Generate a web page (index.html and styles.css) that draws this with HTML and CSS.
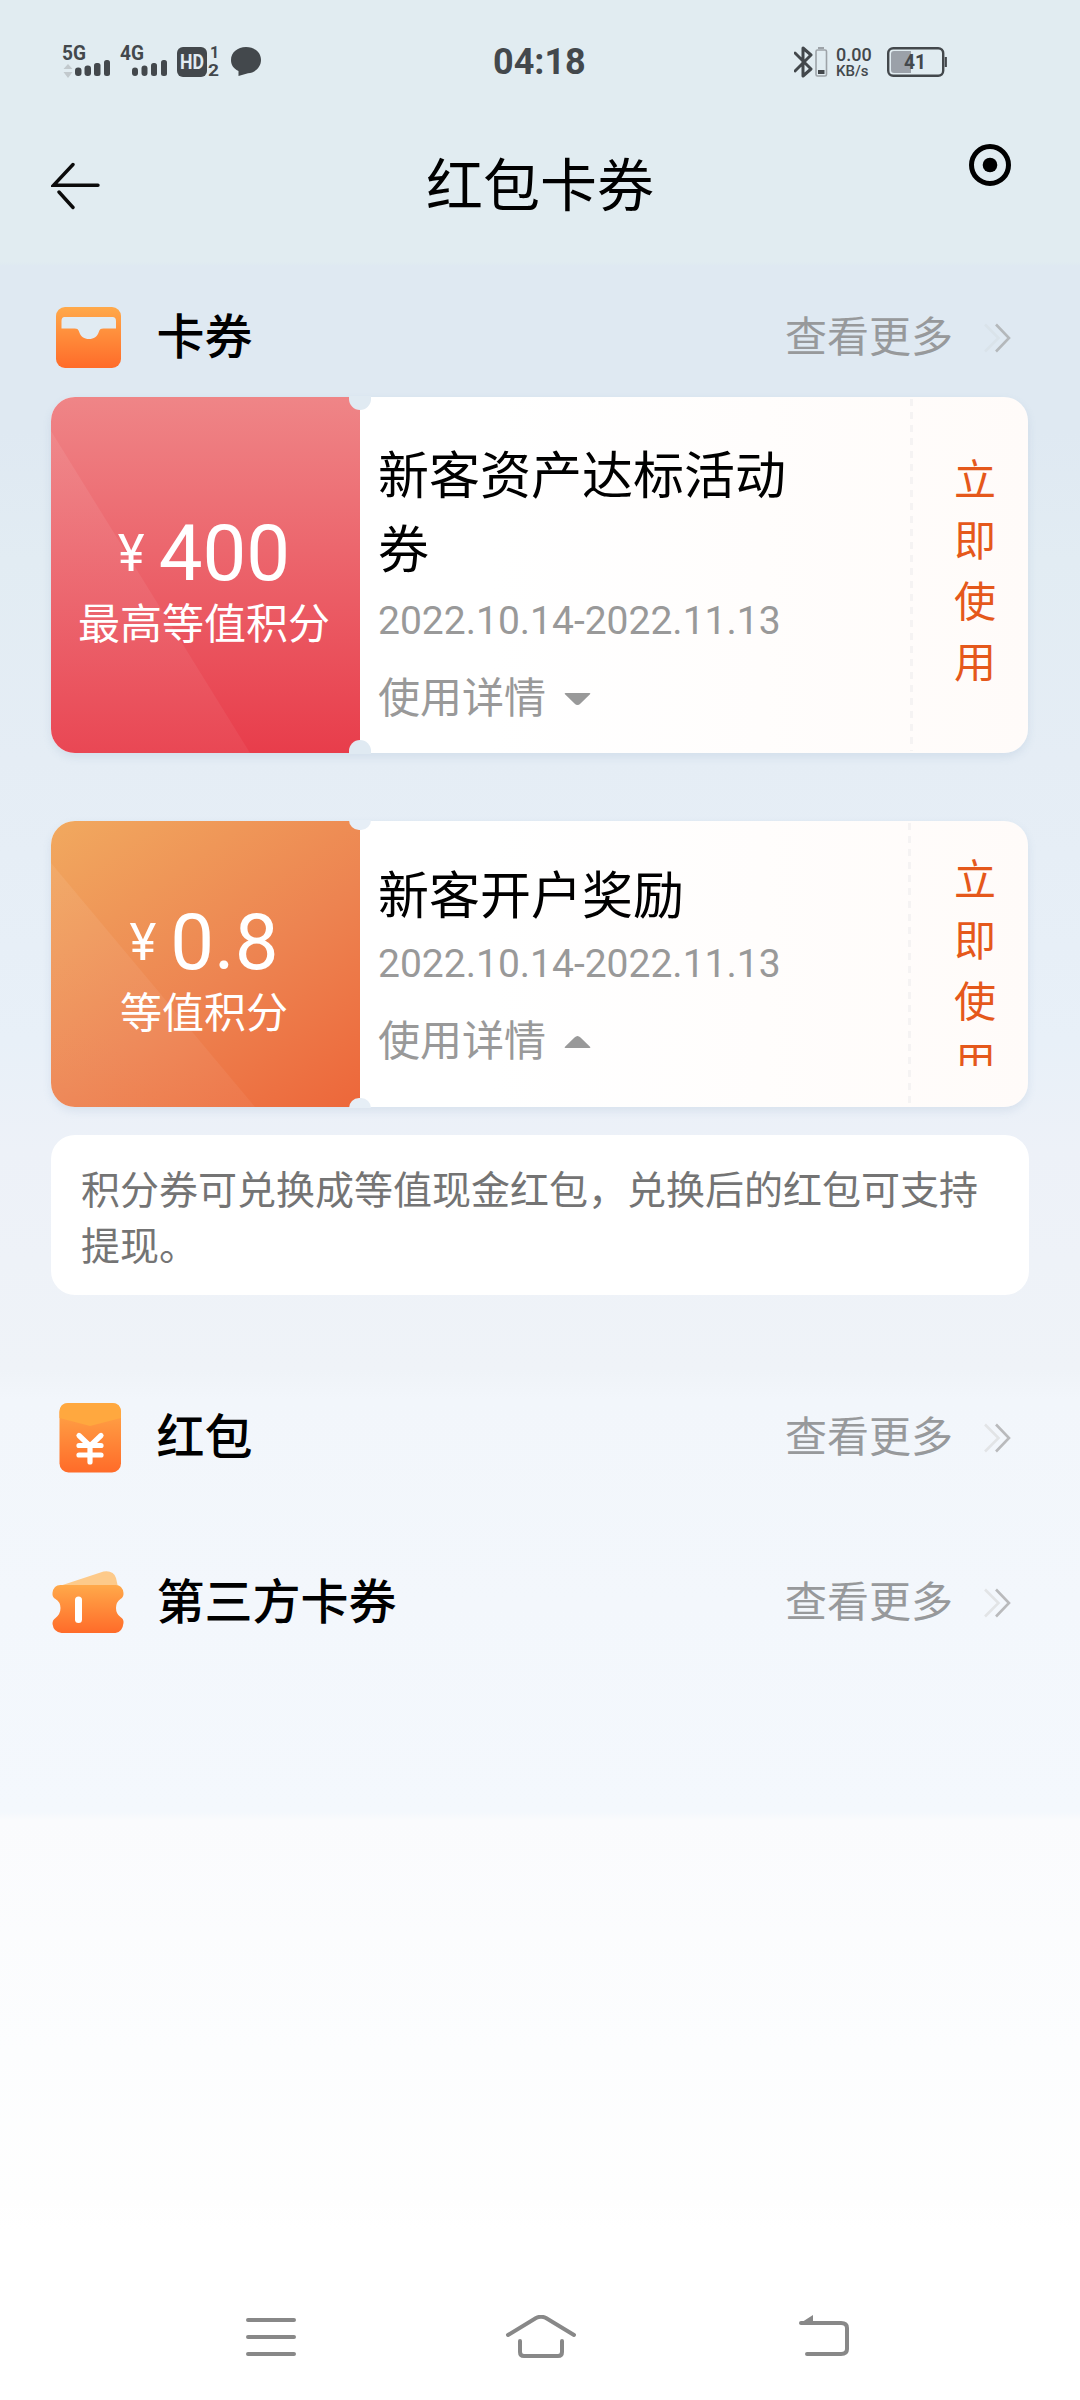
FILE: index.html
```html
<!DOCTYPE html>
<html lang="zh-CN">
<head>
<meta charset="utf-8">
<title>红包卡券</title>
<link rel="stylesheet" href="styles.css">
</head>
<body>
<div class="screen">
  <div class="status">
    <div class="status-left">
      <svg width="204" height="40" viewBox="60 42 204 40">
        <g fill="#43484c">
          <text class="net" x="62" y="60" textLength="24" lengthAdjust="spacingAndGlyphs">5G</text>
          <rect x="75" y="67.500" width="6.500" height="8.500" rx="3"/><rect x="84.500" y="65.500" width="6.500" height="10.500" rx="3"/><rect x="94" y="63" width="6.500" height="13" rx="2.500"/><rect x="104" y="60" width="6" height="16" rx="2.500"/>
          <text class="net" x="120" y="60" textLength="24" lengthAdjust="spacingAndGlyphs">4G</text>
          <rect x="132" y="67.500" width="6" height="8.500" rx="3"/><rect x="141.500" y="65.500" width="6" height="10.500" rx="3"/><rect x="151" y="63" width="6" height="13" rx="2.500"/><rect x="161" y="60" width="6" height="16" rx="2.500"/>
          <rect x="177" y="47" width="30" height="30" rx="6"/>
          <text class="sim" x="210" y="58">1</text>
          <text class="sim" x="208" y="76" textLength="11" lengthAdjust="spacingAndGlyphs">2</text>
          <path d="M246 47c8.500 0 15 5.500 15 13s-6.500 13-13 13.300L238.500 76v-5C233 68.500 231 64.500 231 60c0-7.500 6.500-13 15-13z"/>
        </g>
        <path d="M63.500 69l4.500-5 4.500 5zM63.500 72l4.500 6 4.500-6z" fill="#c2c9cd"/>
        <text class="hd" x="180" y="69" textLength="24" lengthAdjust="spacingAndGlyphs">HD</text>
      </svg>
    </div>
    <div class="time">04:18</div>
    <div class="status-right">
      <svg width="34" height="34" viewBox="794 45 34 34">
        <path d="M795 53l16 16-8 7V48l8 7-16 16" fill="none" stroke="#43484c" stroke-width="3" stroke-linejoin="round" stroke-linecap="round"/>
        <rect x="816" y="50" width="10.500" height="26" rx="1.500" fill="none" stroke="#9da3a8" stroke-width="1.600"/>
        <path d="M818 48h6" stroke="#9da3a8" stroke-width="2"/>
        <path d="M818 70h6.500v4H818z" fill="#43484c"/>
      </svg>
      <div class="speed"><span>0.00</span><span class="unit">KB/s</span></div>
      <svg width="62" height="32" viewBox="886 46 62 32">
        <rect x="888.200" y="48.200" width="55" height="27.600" rx="5" fill="none" stroke="#43484c" stroke-width="2.400"/>
        <path d="M894 51h17v22h-17a3 3 0 0 1-3-3V54a3 3 0 0 1 3-3z" fill="#9ba1a9"/>
        <path d="M945.800 57v10" stroke="#43484c" stroke-width="2.200"/>
        <text class="level" x="904" y="69" textLength="22" lengthAdjust="spacingAndGlyphs">41</text>
      </svg>
    </div>
  </div>

  <header class="header">
    <svg class="back" width="50" height="50" viewBox="51 160 50 50" fill="none" stroke="#0b0b0b" stroke-width="3.400" stroke-linecap="round"><path d="M73 164.500L53.500 185.300H98M59 192l14 15.500"/></svg>
    <h1>红包卡券</h1>
    <svg class="target" width="42" height="42" viewBox="0 0 42 42"><circle cx="21" cy="21" r="18.500" fill="none" stroke="#000" stroke-width="5"/><circle cx="21" cy="21" r="7.300"/></svg>
  </header>

  <section class="row row-coupons">
    <svg class="icon" width="75" height="76" viewBox="0.500 3 75 76">
      <defs>
        <linearGradient id="orange" x1="0" y1="0" x2="0" y2="1"><stop offset="0" stop-color="#ffa94a"/><stop offset="1" stop-color="#ff6b29"/></linearGradient>
      </defs>
      <rect x="5.500" y="10" width="65" height="61" rx="9" fill="url(#orange)"/>
      <path d="M14 20h48q3.500 0 3.500 4v7.500H53c-3 0-4 1-4.700 3.500-1.300 4.500-5 7-9.800 7s-8.500-2.500-9.800-7c-.7-2.500-1.700-3.500-4.700-3.500H11V24q0-4 3-4z" fill="#e1ebf2"/>
    </svg>
    <h2>卡券</h2>
    <a class="more">查看更多<svg width="28" height="32" viewBox="0 0 28 32" fill="none" stroke-width="2.600"><path d="M2 2.500l13.500 13.500L2 29.500" stroke="#dae3ea"/><path d="M13 2.500L26 16 13 29.500" stroke="#b4b8bb"/></svg></a>
  </section>

  <article class="coupon coupon-red">
    <div class="value">
      <div class="amount"><span class="yen">¥</span>400</div>
      <div class="kind">最高等值积分</div>
    </div>
    <div class="info">
      <h3>新客资产达标活动券</h3>
      <div class="date">2022.10.14-2022.11.13</div>
      <div class="detail">使用详情<svg width="27" height="12" viewBox="0 0 27 12"><path d="M1.500 0h24q1.500 0 .5 1.200L16.500 10.500q-3 3-6 0L1 1.200Q0 0 1.500 0z" fill="#999"/></svg></div>
    </div>
    <div class="use"><span>立即使用</span></div>
    <i class="notch notch-top"></i><i class="notch notch-bottom"></i>
  </article>

  <article class="coupon coupon-orange">
    <div class="value">
      <div class="amount"><span class="yen">¥</span>0.8</div>
      <div class="kind">等值积分</div>
    </div>
    <div class="info">
      <h3>新客开户奖励</h3>
      <div class="date">2022.10.14-2022.11.13</div>
      <div class="detail">使用详情<svg width="27" height="12" viewBox="0 0 27 12"><path d="M1.500 12h24q1.500 0 .5-1.200L16.500 1.500q-3-3-6 0L1 10.800Q0 12 1.500 12z" fill="#999"/></svg></div>
    </div>
    <div class="use"><span>立即使用</span></div>
    <i class="notch notch-top"></i><i class="notch notch-bottom"></i>
  </article>

  <p class="note">积分券可兑换成等值现金红包，兑换后的红包可支持提现。</p>

  <section class="row row-packets">
    <svg class="icon" width="75" height="76" viewBox="1 0 75 76">
      <rect x="9.500" y="3" width="61.500" height="69.500" rx="9" fill="url(#orange)"/>
      <path d="M18.500 3h43.500q9 0 9 9v6L40 26 9.500 18v-6q0-9 9-9z" fill="#ffa83f"/>
      <path d="M29 35.500L40 46l11-10.500M29 45.500h22M29 55h22M40 46v16" fill="none" stroke="#fff" stroke-width="5.200" stroke-linecap="round" stroke-linejoin="round"/>
    </svg>
    <h2>红包</h2>
    <a class="more">查看更多<svg width="28" height="32" viewBox="0 0 28 32" fill="none" stroke-width="2.600"><path d="M2 2.500l13.500 13.500L2 29.500" stroke="#e2e4e6"/><path d="M13 2.500L26 16 13 29.500" stroke="#b9babc"/></svg></a>
  </section>

  <section class="row row-third">
    <svg class="icon" width="75" height="76" viewBox="1.500 -1 75 76">
      <path d="M7 21L54 5.500Q64 4 66.500 12l2 9z" fill="#fdca8a"/>
      <path d="M11 19h55q7 0 8 8 .3 4-3 6-4.500 3-4.500 9t4.500 9q3.500 2 3 6-1 9-8 10H12q-8-1-9-9-.2-4 3-6 5-4 5-10t-5-9q-3.500-2-3-6 1-8 8-8z" fill="url(#orange)"/>
      <path d="M29 34v19.500" stroke="#fff" stroke-width="7" stroke-linecap="round"/>
    </svg>
    <h2>第三方卡券</h2>
    <a class="more">查看更多<svg width="28" height="32" viewBox="0 0 28 32" fill="none" stroke-width="2.600"><path d="M2 2.500l13.500 13.500L2 29.500" stroke="#e2e4e6"/><path d="M13 2.500L26 16 13 29.500" stroke="#b9babc"/></svg></a>
  </section>

  <nav class="nav">
    <svg width="52" height="44" viewBox="0 0 52 44" fill="none" stroke="#888" stroke-width="4" stroke-linecap="round"><path d="M3 5h46M3 22h46M3 39h46"/></svg>
    <svg class="home" width="72" height="44" viewBox="0 0 72 44" fill="none" stroke="#888" stroke-width="4" stroke-linecap="round"><path d="M3 20L31 3q5-2.500 10 0l28 17M15 26v11q0 4 4 4h34q4 0 4-4V26"/></svg>
    <svg width="52" height="44" viewBox="0 0 52 44" fill="none" stroke="#888" stroke-width="4" stroke-linecap="round"><path d="M9 39h34q6 0 6-5V13q0-5-6-5H3"/><path d="M1 9L15 0v9z" fill="#888" stroke="none"/></svg>
  </nav>
</div>
</body>
</html>
```
FILE: styles.css
```css
* { box-sizing: border-box; }
body { margin: 0; font-family: Roboto, "Noto Sans CJK SC", sans-serif; }
h1, h2, h3, p { margin: 0; font-weight: 400; }
svg { display: block; flex: none; }

.screen {
  display: flex;
  flex-direction: column;
  width: 1080px;
  height: 2400px;
  padding: 0 51px;
  overflow: hidden;
  background: linear-gradient(#e1ecf1 0, #e1ecf1 262px, #dfe9f2 266px, #dfe9f2 430px, #e2ecf3 560px, #e5edf5 760px, #e8f0f8 1040px, #edf1f8 1150px, #eff3f8 1370px, #f2f6fb 1400px, #f4f8fd 1812px, #fafbfd 1820px, #fcfdfe 2050px, #fefefe 2200px, #fff 2230px);
}

.status {
  display: grid;
  grid-template-columns: 433px 95px 1fr;
  height: 124px;
  padding-left: 9px;
  align-items: center;
  color: #43484c;
}
.status-left, .status-right, .time { height: 124px; display: flex; align-items: center; }
.time { font-size: 36px; font-weight: 700; }
.status-right { justify-content: flex-end; padding-right: 81px; }
.speed { display: flex; flex-direction: column; margin: 1px 14px 0 8px; width: 36px; font-weight: 500; font-size: 18px; line-height: 18px; }
.unit { font-size: 15px; line-height: 15px; }
.net { font-size: 21px; font-weight: 700; }
.sim { font-size: 16px; font-weight: 700; }
.hd { font-size: 20px; font-weight: 700; fill: #e1ecf2; }
.level { font-size: 20px; font-weight: 700; fill: #43484c; }

.header { display: flex; height: 164px; }
.back { margin-top: 36px; }
.header h1 { font-size: 57px; line-height: 80px; margin-top: 23px; margin-left: 325px; }
.target { margin-top: 20px; margin-left: auto; margin-right: 18px; }

.row { display: flex; align-items: center; height: 100px; padding-right: 18px; }
.icon { margin-right: 31px; }
.row h2 { font-size: 48px; line-height: 60px; margin-left: -.5px; font-weight: 500; }
.more { display: flex; align-items: center; gap: 30px; margin-left: auto; font-size: 42px; line-height: 60px; color: #97999b; }
.row-coupons { margin-bottom: 9px; }
.row-coupons h2, .row-coupons .more { margin-top: -1px; }

.coupon {
  position: relative;
  display: flex;
  width: 977px;
  border-radius: 24px;
  background: linear-gradient(90deg, #fff 45%, #fffbf9);
  box-shadow: 0 4px 8px rgba(120, 150, 185, .16);
}
.coupon-red { height: 356px; margin-bottom: 68px; }
.coupon-orange { height: 286px; margin-bottom: 28px; }
.value {
  position: relative;
  display: flex;
  flex-direction: column;
  align-items: center;
  justify-content: center;
  width: 309px;
  padding: 15px 3px 0 0;
  border-radius: 24px 0 0 24px;
  color: #fff;
  overflow: hidden;
}
/* diagonal sheen across the lower left of the value panel */
.value::before {
  content: "";
  position: absolute;
  inset: 0;
  background: linear-gradient(rgba(255, 255, 255, .08), rgba(255, 255, 255, .05));
}
.coupon-red .value { background: linear-gradient(#ef8587, #e83d4b); }
.coupon-red .value::before { clip-path: polygon(0 34px, 199px 100%, 0 100%); }
.coupon-orange .value { background: linear-gradient(145deg, #f1a95f, #ed8451 55%, #ed673a); }
.coupon-orange .value::before { clip-path: polygon(0 42px, 204px 100%, 0 100%); }
.amount, .kind { position: relative; }
.amount { font-size: 78px; line-height: 84px; }
.yen { font-size: 51px; line-height: 0; margin-right: 14px; vertical-align: 9px; }
.kind { font-size: 42px; line-height: 58px; }
.info { width: 550px; padding-left: 18px; }
.info h3 { width: 410px; font-size: 51px; line-height: 74px; word-break: break-all; }
.coupon-red h3 { margin-top: 43px; }
.coupon-orange h3 { margin-top: 39px; }
.date { font-size: 39px; line-height: 66px; color: #999; }
.coupon-orange .date { margin-top: -3px; }
.detail { display: flex; align-items: center; gap: 18px; margin-top: 15px; font-size: 42px; line-height: 60px; color: #999; }
.use {
  flex: 1;
  display: flex;
  justify-content: center;
  margin: 2px 0;
  padding-left: 12px;
  background: repeating-linear-gradient(#f5f3f3 0 7px, transparent 7px 13px) 0 0 / 3px 100% no-repeat;
}
.use span { width: 42px; font-size: 42px; line-height: 61px; color: #e5581b; word-break: break-all; overflow: hidden; }
.coupon-red .use span { margin-top: 51px; }
.coupon-orange .info { width: 548px; }
.coupon-orange .use { padding-left: 14px; }
.coupon-orange .use span { margin-top: 27px; height: 216px; }
.notch { position: absolute; left: 298px; width: 22px; height: 14px; background: #e0eaf2; }
.notch-top { top: -1px; border-radius: 0 0 11px 11px; }
.notch-bottom { bottom: -1px; border-radius: 11px 11px 0 0; }
.coupon-orange .notch { height: 10px; background: #e6eef6; }

.note {
  height: 160px;
  padding: 28px 30px 0;
  border-radius: 24px;
  background: #fff;
  font-size: 39px;
  line-height: 56px;
  color: #747474;
}
.row-packets { margin-top: 93px; }
.row-third { margin-top: 65px; }

.nav { display: flex; justify-content: space-between; margin: auto 179px 41px 194px; }
.home { margin-left: -14px; }
```
